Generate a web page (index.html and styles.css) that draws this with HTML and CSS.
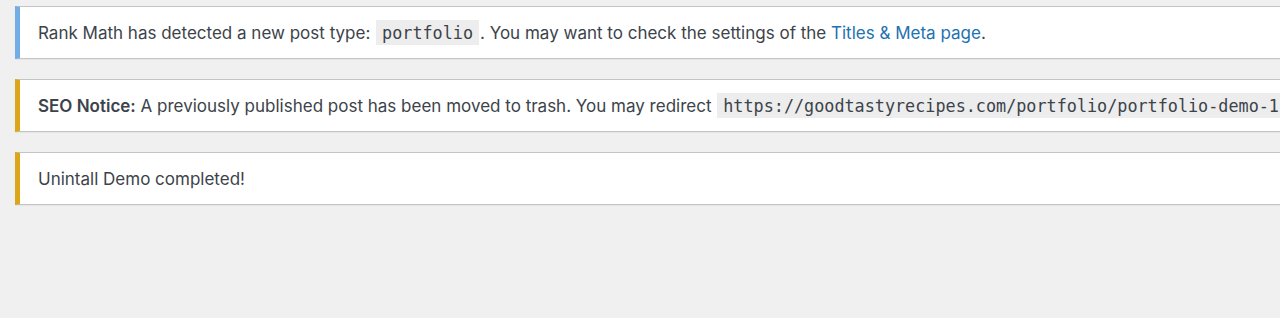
FILE: index.html
```html
<!DOCTYPE html>
<html lang="en">
<head>
  <meta charset="UTF-8" />
  <title>Notices</title>
  <link rel="stylesheet" href="styles.css">
</head>
<body>

  <div class="notices">
    <div class="notice notice-info">
      <p>Rank Math has detected a new post type: <code>portfolio</code>. You may want to check the settings of the <a href="#">Titles &amp; Meta page</a>.</p>
    </div>

    <div class="notice notice-warning">
      <p><strong>SEO Notice:</strong> A previously published post has been moved to trash. You may redirect <code>https://goodtastyrecipes.com/portfolio/portfolio-demo-1</code></p>
    </div>

    <div class="notice notice-warning">
      <p>Unintall Demo completed!</p>
    </div>
  </div>

</body>
</html>
```

FILE: styles.css
```css
html, body {
  overflow: hidden;
}

body {
  margin: 0;
  background: #f0f0f1;
  font-family: Inter, "Liberation Sans", sans-serif;
  font-size: 17px;
  color: #3c434a;
}

.notices {
  width: max-content;
  min-width: 100%;
  padding: 6px 0 0 15px;
}

.notice {
  background: #fff;
  border: 1px solid #c3c4c7;
  border-left-width: 5px;
  box-shadow: 0 1px 1px rgba(0, 0, 0, 0.04);
  margin-bottom: 20px;
  padding: 0 19px 0 18px;
}

.notice-info {
  border-left-color: #72aee6;
}

.notice-warning {
  border-left-color: #dba617;
}

.notice p {
  margin: 0;
  padding: 14px 0 12px;
  line-height: 25px;
  white-space: nowrap;
}

.notice a {
  color: #2271b1;
  text-decoration: none;
}

.notice strong {
  font-weight: 600;
}

code {
  font-family: "DejaVu Sans Mono", monospace;
  font-size: 16.8px;
  background: #ededed;
  padding: 3px 6px 2px;
  margin: 0 1px;
}
```
